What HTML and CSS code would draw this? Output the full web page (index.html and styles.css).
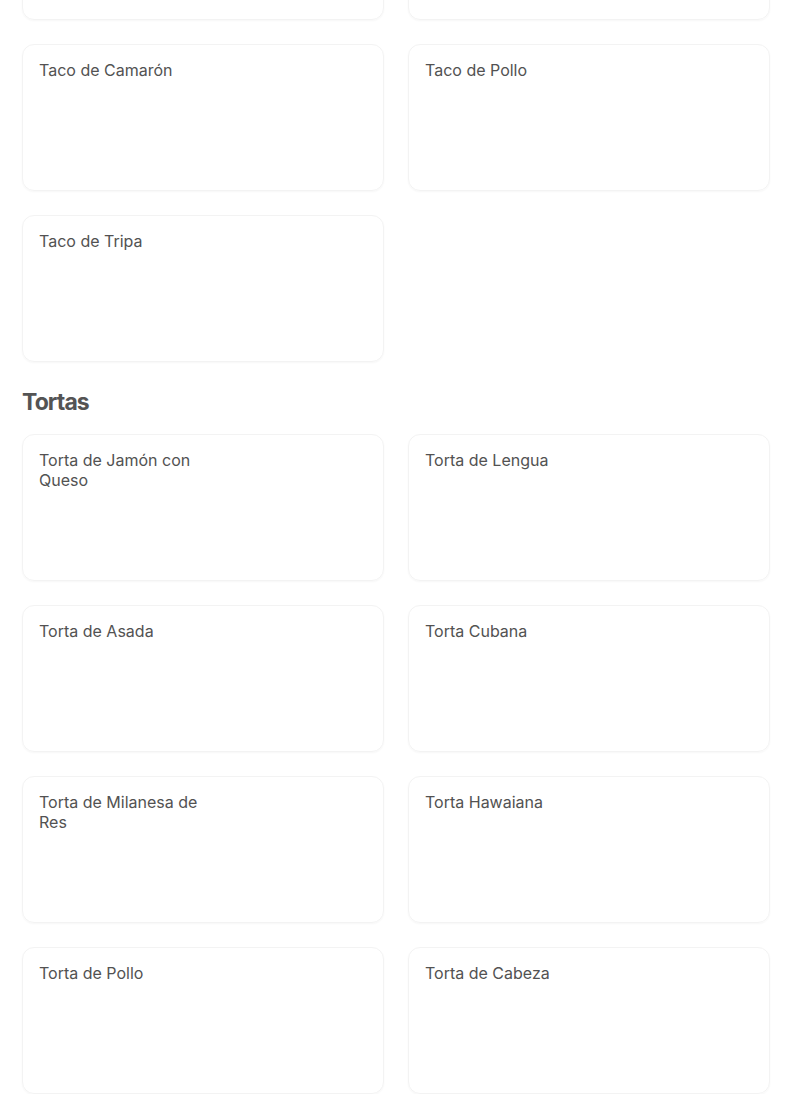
FILE: index.html
```html
<!DOCTYPE html>
<html lang="es">
<head>
<meta charset="utf-8">
<link rel="stylesheet" href="styles.css">
</head>
<body>
<main class="menu">
  <section class="section">
    <div class="grid">
      <div class="card"></div>
      <div class="card"></div>
      <div class="card"><div class="name">Taco de Camarón</div></div>
      <div class="card"><div class="name">Taco de Pollo</div></div>
      <div class="card"><div class="name">Taco de Tripa</div></div>
    </div>
  </section>
  <section class="section">
    <h2 class="section-title">Tortas</h2>
    <div class="grid">
      <div class="card"><div class="name">Torta de Jamón con Queso</div></div>
      <div class="card"><div class="name">Torta de Lengua</div></div>
      <div class="card"><div class="name">Torta de Asada</div></div>
      <div class="card"><div class="name">Torta Cubana</div></div>
      <div class="card"><div class="name">Torta de Milanesa de Res</div></div>
      <div class="card"><div class="name">Torta Hawaiana</div></div>
      <div class="card"><div class="name">Torta de Pollo</div></div>
      <div class="card"><div class="name">Torta de Cabeza</div></div>
    </div>
  </section>
</main>
</body>
</html>
```

FILE: styles.css
```css
html, body {
  margin: 0;
  padding: 0;
  background: #ffffff;
}
body {
  font-family: "Inter", "Roboto", "Liberation Sans", sans-serif;
  color: #525252;
  overflow: hidden;
}
.menu {
  width: 748px;
  margin: -127px 0 0 22px;
}
.grid {
  display: grid;
  grid-template-columns: 1fr 1fr;
  column-gap: 24px;
  row-gap: 24px;
}
.card {
  height: 147px;
  box-sizing: border-box;
  border: 1px solid #f3f3f3;
  border-radius: 12px;
  box-shadow: 0 1px 2px rgba(0, 0, 0, 0.035);
  padding: 15px 16px;
}
.name {
  font-size: 16px;
  line-height: 20px;
  font-weight: 400;
  max-width: 180px;
}
.section-title {
  margin: 24px 0 0 0;
  height: 48px;
  font-size: 23px;
  line-height: 32px;
  font-weight: 700;
  letter-spacing: -0.9px;
  color: #545454;
}
```
